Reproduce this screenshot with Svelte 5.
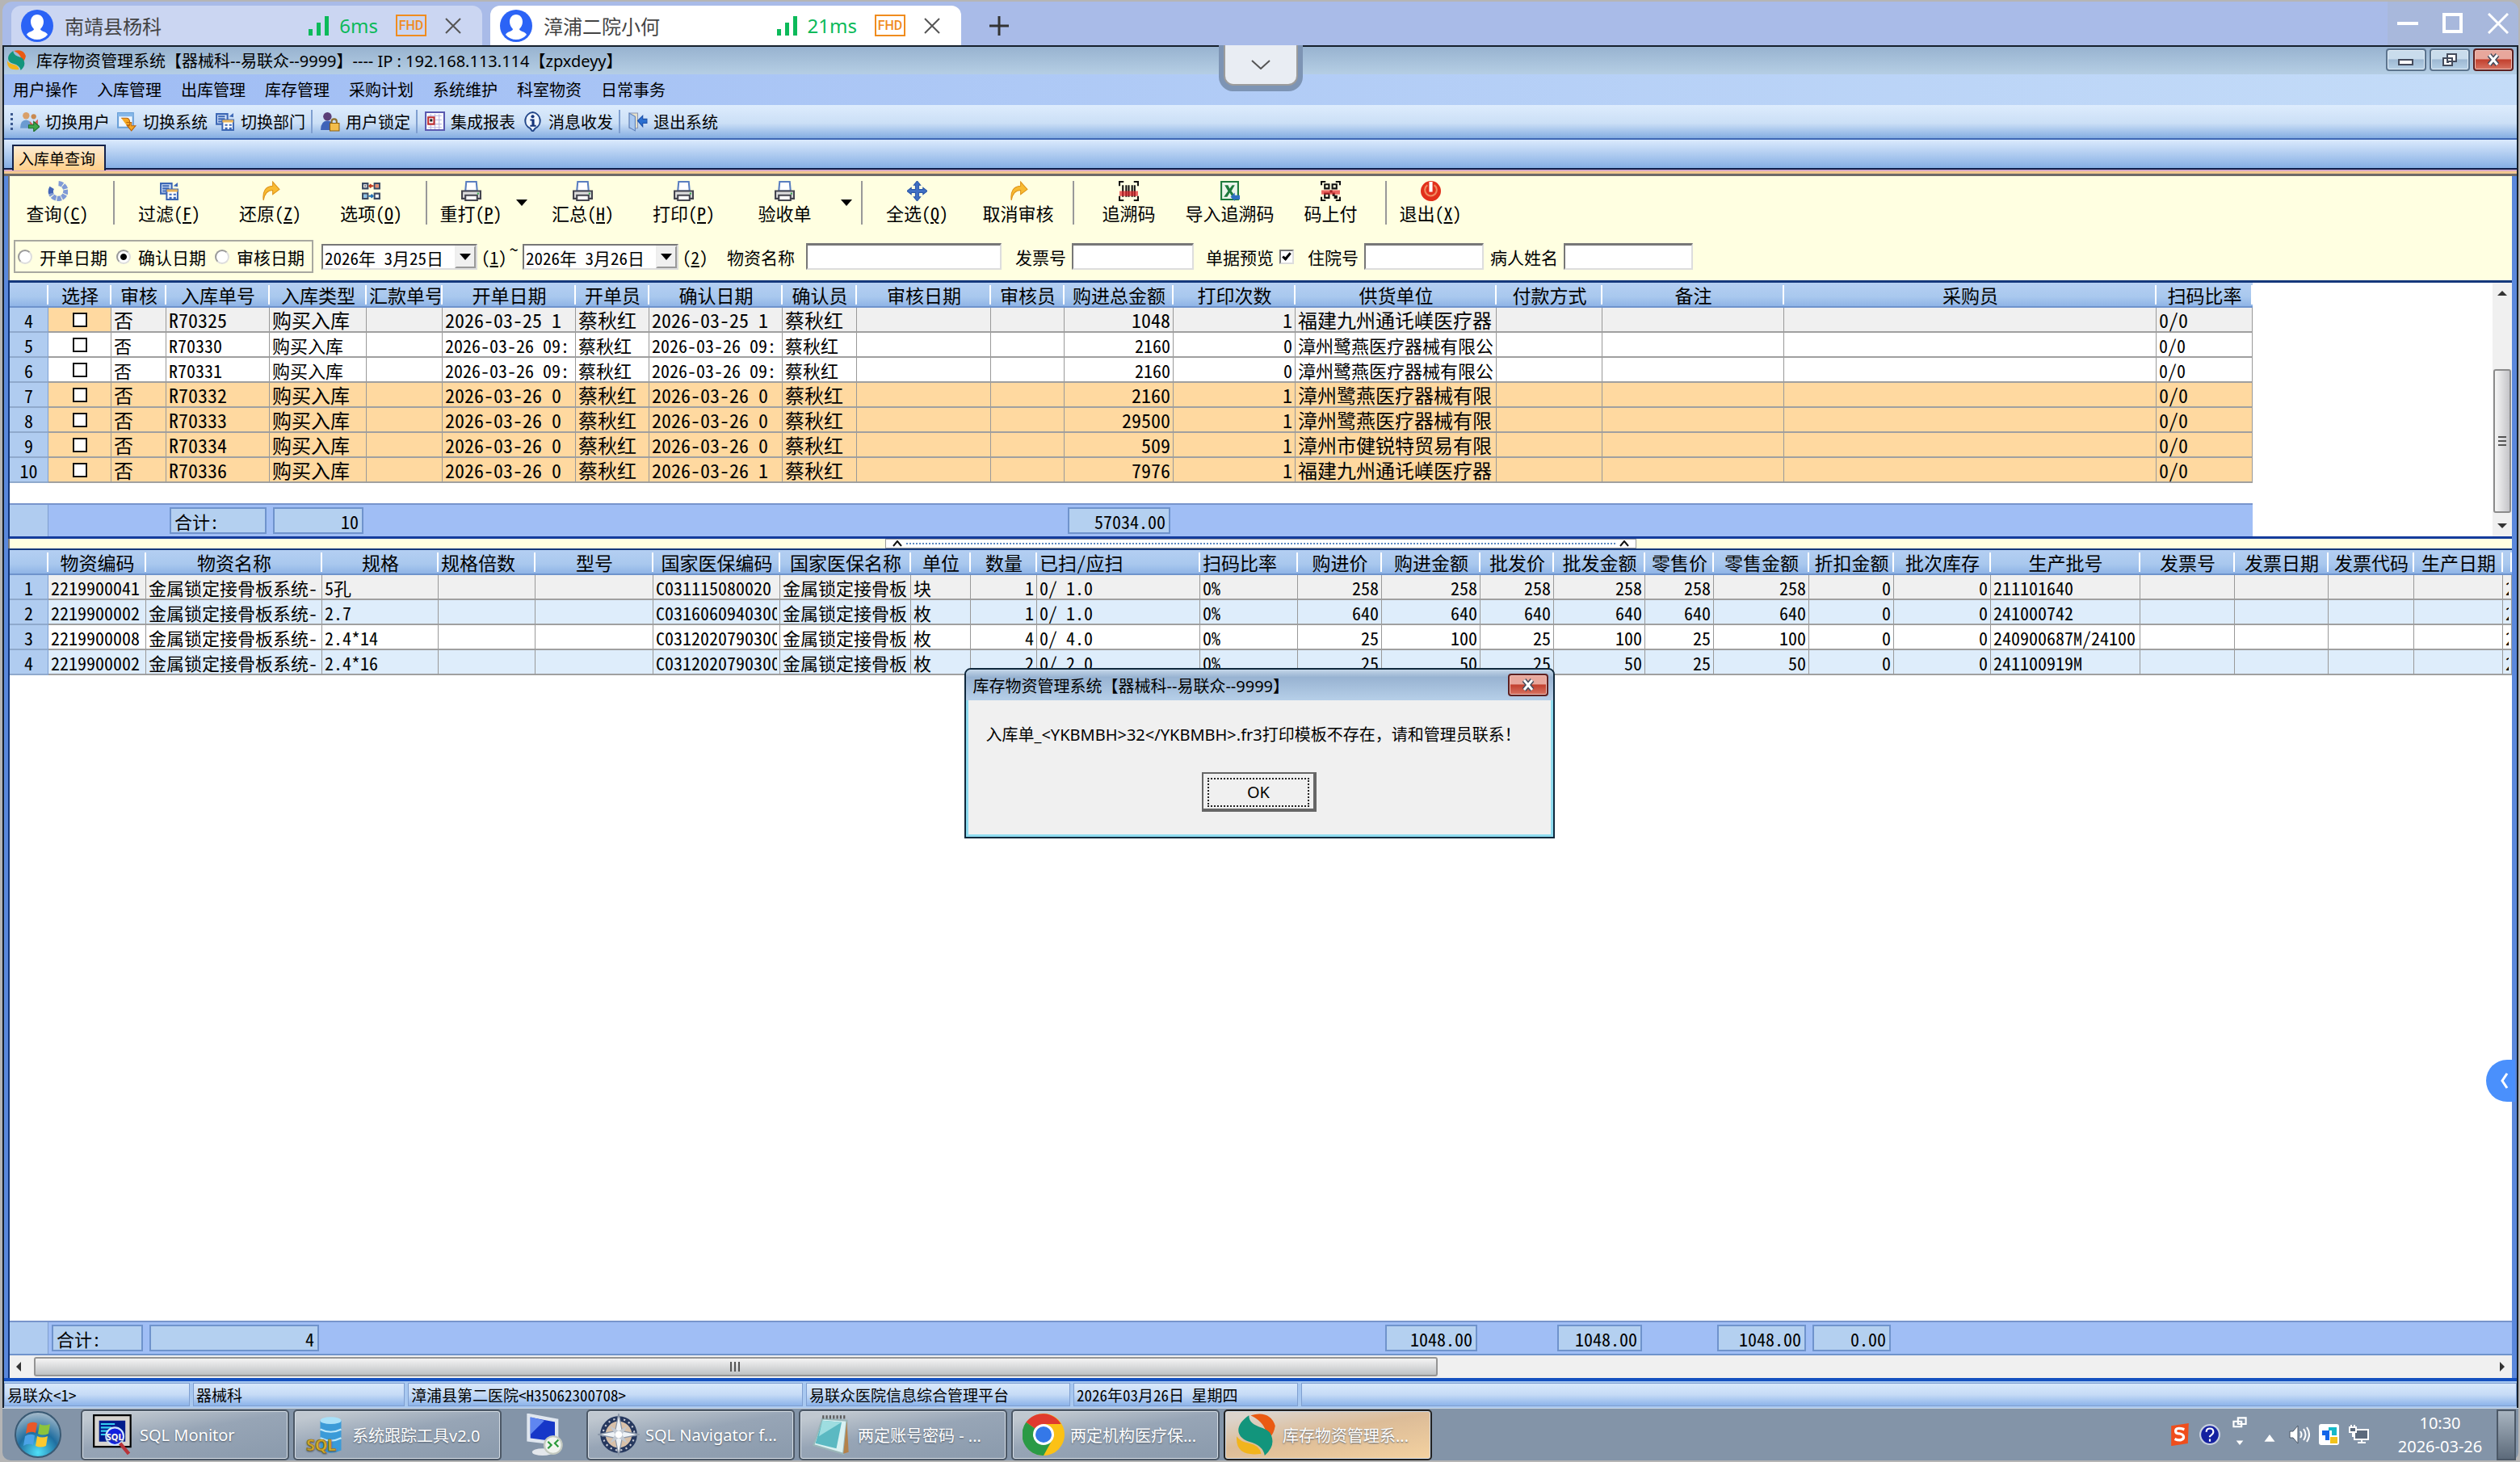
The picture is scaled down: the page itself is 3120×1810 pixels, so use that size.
<!--
  Remote desktop session window. Shows the stock management client with the
  receipt list on top, its detail lines below and a modal message over both.
-->

<script lang="ts">
	// SECTION 1: DATA
	type Column = { title: string; width: number; align?: string; left?: boolean };

	const sessions = [
		{ name: '南靖县杨科', ping: '6ms', active: false },
		{ name: '漳浦二院小何', ping: '21ms', active: true }
	];

	const menus = ['用户操作', '入库管理', '出库管理', '库存管理', '采购计划', '系统维护', '科室物资', '日常事务'];

	const quickTools = [
		[
			{ icon: 'users', label: '切换用户' },
			{ icon: 'system', label: '切换系统' },
			{ icon: 'dept', label: '切换部门' }
		],
		[{ icon: 'lock', label: '用户锁定' }],
		[
			{ icon: 'report', label: '集成报表' },
			{ icon: 'info', label: '消息收发' }
		],
		[{ icon: 'exit', label: '退出系统' }]
	];

	const actions = [
		[{ icon: 'refresh', label: '查询', key: 'C', size: 'first' }],
		[
			{ icon: 'dept', label: '过滤', key: 'F' },
			{ icon: 'redo', label: '还原', key: 'Z' },
			{ icon: 'options', label: '选项', key: 'O' }
		],
		[
			{ icon: 'printer', label: '重打', key: 'P', size: 'narrow', drop: true },
			{ icon: 'printer', label: '汇总', key: 'H' },
			{ icon: 'printer', label: '打印', key: 'P' },
			{ icon: 'printer', label: '验收单', drop: true }
		],
		[
			{ icon: 'move', label: '全选', key: 'Q' },
			{ icon: 'redo', label: '取消审核' }
		],
		[
			{ icon: 'barcode', label: '追溯码' },
			{ icon: 'excel', label: '导入追溯码' },
			{ icon: 'qrcode', label: '码上付' }
		],
		[{ icon: 'power', label: '退出', key: 'X', size: 'narrow' }]
	];

	const dateKinds = ['开单日期', '确认日期', '审核日期'];
	let dateKind = $state('确认日期');
	let preview = $state(true);

	const receiptColumns: Column[] = [
		{ title: '', width: 48 },
		{ title: '选择', width: 78 },
		{ title: '审核', width: 68 },
		{ title: '入库单号', width: 128 },
		{ title: '入库类型', width: 120 },
		{ title: '汇款单号', width: 94 },
		{ title: '开单日期', width: 165 },
		{ title: '开单员', width: 91 },
		{ title: '确认日期', width: 165 },
		{ title: '确认员', width: 92 },
		{ title: '审核日期', width: 166 },
		{ title: '审核员', width: 91 },
		{ title: '购进总金额', width: 135, align: 'right' },
		{ title: '打印次数', width: 151, align: 'right' },
		{ title: '供货单位', width: 249 },
		{ title: '付款方式', width: 131 },
		{ title: '备注', width: 225 },
		{ title: '采购员', width: 461 },
		{ title: '扫码比率', width: 119 }
	];

	function receipt(no: number, code: string, opened: string, confirmed: string, total: string, prints: string, supplier: string, look: string) {
		return {
			no,
			look,
			cells: ['否', code, '购买入库', '', opened, '蔡秋红', confirmed, '蔡秋红', '', '', total, prints, supplier, '', '', '', '0/0']
		};
	}

	const receipts = [
		receipt(4, 'R70325', '2026-03-25 1', '2026-03-25 1', '1048', '1', '福建九州通讬嵄医疗器', 'current'),
		receipt(5, 'R70330', '2026-03-26 09:', '2026-03-26 09:', '2160', '0', '漳州鹭燕医疗器械有限公', 'plain'),
		receipt(6, 'R70331', '2026-03-26 09:', '2026-03-26 09:', '2160', '0', '漳州鹭燕医疗器械有限公', 'plain'),
		receipt(7, 'R70332', '2026-03-26 0', '2026-03-26 0', '2160', '1', '漳州鹭燕医疗器械有限', 'printed'),
		receipt(8, 'R70333', '2026-03-26 0', '2026-03-26 0', '29500', '1', '漳州鹭燕医疗器械有限', 'printed'),
		receipt(9, 'R70334', '2026-03-26 0', '2026-03-26 0', '509', '1', '漳州市健锐特贸易有限', 'printed'),
		receipt(10, 'R70336', '2026-03-26 0', '2026-03-26 1', '7976', '1', '福建九州通讬嵄医疗器', 'printed')
	];

	const detailColumns: Column[] = [
		{ title: '', width: 48 },
		{ title: '物资编码', width: 121 },
		{ title: '物资名称', width: 218 },
		{ title: '规格', width: 144 },
		{ title: '规格倍数', width: 120, left: true },
		{ title: '型号', width: 146 },
		{ title: '国家医保编码', width: 157 },
		{ title: '国家医保名称', width: 162 },
		{ title: '单位', width: 74 },
		{ title: '数量', width: 82, align: 'right' },
		{ title: '已扫/应扫', width: 202, left: true },
		{ title: '扫码比率', width: 121, left: true },
		{ title: '购进价', width: 104, align: 'right' },
		{ title: '购进金额', width: 122, align: 'right' },
		{ title: '批发价', width: 91, align: 'right' },
		{ title: '批发金额', width: 113, align: 'right' },
		{ title: '零售价', width: 85, align: 'right' },
		{ title: '零售金额', width: 118, align: 'right' },
		{ title: '折扣金额', width: 105, align: 'right' },
		{ title: '批次库存', width: 120, align: 'right' },
		{ title: '生产批号', width: 185 },
		{ title: '发票号', width: 117 },
		{ title: '发票日期', width: 116 },
		{ title: '发票代码', width: 106 },
		{ title: '生产日期', width: 110 },
		{ title: '', width: 11 }
	];

	function detail(code: string, spec: string, insurance: string, unit: string, count: string, price: string, sum: string, batch: string) {
		return [
			code, '金属锁定接骨板系统-', spec, '', '', insurance, '金属锁定接骨板', unit, count,
			`0/ ${count}.0`, '0%', price, sum, price, sum, price, sum, '0', '0', batch, '', '', '', '', '2'
		];
	}

	const details = [
		detail('2219900041', '5孔', 'C031115080020', '块', '1', '258', '258', '211101640'),
		detail('2219900002', '2.7', 'C0316060940300', '枚', '1', '640', '640', '241000742'),
		detail('2219900008', '2.4*14', 'C0312020790300', '枚', '4', '25', '100', '240900687M/24100'),
		detail('2219900002', '2.4*16', 'C0312020790300', '枚', '2', '25', '50', '241100919M')
	];

	// Totals by column index
	const receiptTotals: Record<number, string> = { 3: '合计:', 4: '10', 12: '57034.00' };
	const detailTotals: Record<number, string> = {
		1: '合计:', 2: '4', 13: '1048.00', 15: '1048.00', 17: '1048.00', 18: '0.00'
	};

	const statusPanels = [
		{ text: '易联众<1>', width: 230 },
		{ text: '器械科', width: 262 },
		{ text: '漳浦县第二医院<H35062300708>', width: 489 },
		{ text: '易联众医院信息综合管理平台', width: 327 },
		{ text: '2026年03月26日 星期四', width: 278 }
	];

	const tasks = [
		{ icon: 'monitor', label: 'SQL Monitor' },
		{ icon: 'database', label: '系统跟踪工具v2.0' },
		{ icon: 'remote', label: '' },
		{ icon: 'compass', label: 'SQL Navigator f...' },
		{ icon: 'notepad', label: '两定账号密码 - ...' },
		{ icon: 'chrome', label: '两定机构医疗保...' },
		{ icon: 'app', label: '库存物资管理系...', active: true }
	];
</script>

<!-- SECTION 2: ICONS -->
{#snippet icon(name: string)}
	<svg class="icon" viewBox="0 0 24 24" aria-hidden="true">
		{#if name === 'users'}
			<circle cx="8" cy="5" r="4" fill="#d9a06a" /><circle cx="17" cy="6" r="3" fill="#c98a50" />
			<path d="M1 20q0-10 7-10 6 0 7 10z" fill="#6b9bd1" /><path d="M12 11l4 4 6-6v7h-9z" fill="#d26058" />
			<path d="M11 16h6v-4l7 6-7 6v-4h-6z" fill="#3fa64a" stroke="#1f6f2a" />
		{:else if name === 'system'}
			<path d="M1 2h18v17H1z" fill="#eef6ff" stroke="#6aa0d8" stroke-width="2" /><path d="M1 2h18v4H1z" fill="#86b8e8" />
			<path d="M5 8h6q4 0 4 5v3h-4M11 13h6v4h5l-5 6-5-6h3" fill="#f7a823" stroke="#b9640c" stroke-width="1" />
		{:else if name === 'dept'}
			<path d="M2 3h13v12H2z" fill="#dbe8fb" stroke="#3c67b5" stroke-width="2" /><path d="M4 6h8M4 9h8M4 12h5" stroke="#3c67b5" stroke-width="2" />
			<path d="M9 10h13v12H9z" fill="#fff" stroke="#3c67b5" stroke-width="2" /><path d="M9 10h13v3H9z" fill="#e8b35a" />
			<path d="M12 15h3v2h-3zM17 15h3v2h-3zM12 19h3v2h-3zM17 19h3v2h-3z" fill="#3c67b5" /><path d="M17 6l5-4v5z" fill="#3c67b5" />
		{:else if name === 'lock'}
			<circle cx="9" cy="6" r="5" fill="#5b3f78" /><path d="M1 22q0-11 8-11t8 11z" fill="#3f63b8" />
			<path d="M14 14v-2q0-3 3-3t3 3v2" fill="none" stroke="#8c6f2d" stroke-width="2" /><path d="M12 14h11v9H12z" fill="#f3bd4a" stroke="#8c6010" />
		{:else if name === 'report'}
			<path d="M1 1h22v21H1z" fill="#fdfdff" stroke="#5a5ab0" stroke-width="2" />
			<path d="M4 5h16M4 10h16M4 15h16M4 19h16M7 3v18M12 3v18M17 3v18" stroke="#b9b6e0" /><path d="M4 7h7v8H4z" fill="#fff" stroke="#c03030" stroke-width="2" /><path d="M6 9h3v3H6z" fill="#222" />
		{:else if name === 'info'}
			<path d="M12 1a10 10 0 0 1 3 19l-3 4-3-4a10 10 0 0 1 3-19z" fill="#eef5ff" stroke="#24488a" stroke-width="2" />
			<circle cx="12" cy="6" r="2" fill="#16357a" /><path d="M9 9h5v7h2v2H9v-2h2v-5H9z" fill="#16357a" />
		{:else if name === 'exit'}
			<path d="M2 2h10v18H2z" fill="#e6e0c8" stroke="#8a96b4" /><path d="M2 2l7 4v17l-7-4z" fill="#a9c8f0" stroke="#5c7fb8" />
			<path d="M12 11l6-6v4h5v5h-5v4z" fill="#2a6fd0" stroke="#1a4fa8" />
		{:else if name === 'refresh'}
			<path d="M13 3a9 9 0 1 1-9 12" fill="none" stroke="#7f9ad6" stroke-width="6" stroke-dasharray="5 1" />
			<path d="M4 15a9 9 0 0 1 1-7" fill="none" stroke="#4466b8" stroke-width="6" />
		{:else if name === 'redo'}
			<path d="M4 23q-2-16 11-17V1l8 9-8 6v-5q-9 0-11 12z" fill="#f8bb32" stroke="#de9318" />
		{:else if name === 'options'}
			<path d="M2 3h6v6H2zM16 3h6v6h-6zM2 15h6v6H2zM16 15h6v6h-6z" fill="#fff" stroke="#3b4a63" stroke-width="2" />
			<path d="M15 6h-5m2-2l-2 2 2 2" stroke="#c23b22" stroke-width="2" fill="none" /><path d="M9 18h5m-2-2l2 2-2 2" stroke="#2472b8" stroke-width="2" fill="none" />
			<path d="M4 5h2v2H4z" fill="#777" /><path d="M17 4h4v4h-4z" fill="#e88b6c" /><path d="M3 16h4v4H3z" fill="#8cc3e6" />
		{:else if name === 'printer'}
			<path d="M6 1h12l1 11H5z" fill="#fff" stroke="#5a7ec0" stroke-width="2" /><path d="M1 12h22v9H1z" fill="#dcdcdc" stroke="#44444e" stroke-width="2" />
			<path d="M5 17h14v6H5z" fill="#fafafa" stroke="#44444e" stroke-width="2" /><path d="M19 14h2v2h-2z" fill="#35a54a" />
		{:else if name === 'move'}
			<path d="M12 0l4 5h-2v5h5V8l5 4-5 4v-2h-5v5h2l-4 5-4-5h2v-5H5v2l-5-4 5-4v2h5V5H8z" fill="#3f6fc4" stroke="#2c58a8" />
		{:else if name === 'barcode'}
			<path d="M1 6V1h5M18 1h5v5M1 18v5h5M18 23h5v-5" fill="none" stroke="#111" stroke-width="2" />
			<path d="M5 5v14M9 5v14M12 5v14M16 5v14M19 5v14" stroke="#111" stroke-width="2" /><path d="M1 12h22v6H1z" fill="#e2242a" opacity="0.7" />
		{:else if name === 'excel'}
			<path d="M2 1h20v21H2z" fill="#eaf5ea" stroke="#1d7a3c" stroke-width="2" /><path d="M6 5h4l2 4 3-4h3l-4 7 5 7h-4l-3-5-3 5H5l5-7z" fill="#1d7a3c" />
			<path d="M13 19l5-5v3h6v5h-6v2z" fill="#2d6fc0" />
		{:else if name === 'qrcode'}
			<path d="M1 5V1h5M18 1h5v4M1 19v4h5M18 23h5v-4" fill="none" stroke="#111" stroke-width="2" />
			<path d="M5 4h5v5H5zM14 4h5v5h-5zM5 15h5v5H5z" fill="none" stroke="#111" stroke-width="2" /><path d="M14 14h3v3h3v4h-4v-3h-2zM11 11h3v3h-3z" fill="#111" /><path d="M1 11h22v5H1z" fill="#e2242a" opacity="0.7" />
		{:else if name === 'power'}
			<circle cx="12" cy="12" r="12" fill="#e2301b" /><path d="M8 5a7 7 0 1 0 8 0" fill="none" stroke="#f08a60" stroke-width="2" /><path d="M10 1h4v12h-4z" fill="#fff" />
		{:else if name === 'monitor'}
			<path d="M1 1h21v18H1z" fill="#d6d3ce" stroke="#000" /><path d="M4 4h15v12H4z" fill="#001c8c" /><path d="M5 6h8M5 8h6M5 10h4M5 12h3" stroke="#35d0f0" />
			<circle cx="13" cy="13" r="5" fill="#1220e0" stroke="#cfe6ff" /><path d="M16 17l5 6" stroke="#b8343a" stroke-width="2" />
			<text x="13" y="15" text-anchor="middle" font-size="5" font-weight="bold" fill="#fff">SQL</text>
		{:else if name === 'database'}
			<path d="M9 4v17q6 3 12 0V4z" fill="#3b9bd8" /><ellipse cx="15" cy="4" rx="6" ry="2" fill="#a8e0f8" />
			<path d="M9 9q6 3 12 0M9 14q6 3 12 0" fill="none" stroke="#bfe8fa" /><text x="1" y="21" font-size="9" font-weight="bold" fill="#f8c51c" stroke="#94690a" stroke-width="0.3">SQL</text>
		{:else if name === 'remote'}
			<path d="M3 1l16 3v13L3 15z" fill="#1637c8" stroke="#dfe6ef" stroke-width="2" /><path d="M4 2l8 2-8 8z" fill="#5f86f0" />
			<ellipse cx="11" cy="22" rx="6" ry="2" fill="#e3e7ec" /><circle cx="17" cy="18" r="5" fill="#f1f4ef" stroke="#c3c9c0" /><path d="M14 16l2 2-2 2M20 15l-2 2 2 2" stroke="#2a9a3a" fill="none" />
		{:else if name === 'compass'}
			<circle cx="12" cy="12" r="9" fill="#d8c0a8" stroke="#26385e" stroke-width="3" />
			<circle cx="12" cy="12" r="9" fill="none" stroke="#c8ccd8" stroke-width="1" stroke-dasharray="1 2" />
			<path d="M12 0l2 10 10 2-10 2-2 10-2-10-10-2 10-2z" fill="#eef2f6" stroke="#8a96a8" stroke-width="0.6" />
			<path d="M7 7l5 3 5-3-3 5 3 5-5-3-5 3 3-5z" fill="#c2c9d2" /><circle cx="12" cy="12" r="2" fill="#fff" />
		{:else if name === 'notepad'}
			<path d="M7 3l14 1-2 19-17-5z" fill="#d9f1f2" stroke="#9ab5b8" /><path d="M7 4l11 1-3 15-12-3z" fill="#5bb9c2" /><path d="M7 4l11 1-13 8z" fill="#9edde0" /><path d="M7 2h14" stroke="#5a5a5a" stroke-width="2" stroke-dasharray="1 1" /><path d="M21 4l1 18-3 1z" fill="#b4824a" />
		{:else if name === 'chrome'}
			<circle cx="12" cy="12" r="12" fill="#fbc116" /><path d="M12 12L2 5a12 12 0 0 1 20 1H12z" fill="#e03a2e" />
			<path d="M2 5a12 12 0 0 0 10 19l5-9-5-3z" fill="#2a9a46" /><circle cx="12" cy="12" r="6" fill="#fff" /><circle cx="12" cy="12" r="4.6" fill="#3478e8" />
		{:else if name === 'app'}
			<path d="M9 1q11-3 14 6-1 6-5 8 1-9-9-14z" fill="#ea5a12" /><path d="M8 1C-1 7 1 14 8 16q8 2 9 8 7-6 3-13C17 7 8 8 8 1z" fill="#12957c" />
			<path d="M1 13q-1 12 14 10-1-5-7-6-5-1-7-4z" fill="#f2b41c" />
		{/if}
	</svg>
{/snippet}

{#snippet cols(columns: Column[])}
	<colgroup>
		{#each columns as column}
			<col style="width: {column.width}px" />
		{/each}
	</colgroup>
{/snippet}

{#snippet totals(columns: Column[], values: Record<number, string>)}
	<table class="grid totals" style="width: {columns.reduce((sum, c) => sum + c.width, 0)}px">
		{@render cols(columns)}
		<tbody>
			<tr>
				{#each columns as column, i}
					<td class:rownum={i === 0}>
						{#if values[i]}
							<div class="total" class:caption={values[i] === '合计:'}>{values[i]}</div>
						{/if}
					</td>
				{/each}
			</tr>
		</tbody>
	</table>
{/snippet}

{#snippet cross()}
	<svg class="cross" viewBox="0 0 16 16" aria-hidden="true">
		<path d="M3 2l10 12M13 2L3 14" stroke="#444b5c" stroke-width="6" /><path d="M3 2l10 12M13 2L3 14" stroke="#fff" stroke-width="3" />
	</svg>
{/snippet}

<!-- SECTION 3: PAGE -->
<div class="page">
	<header class="sessions">
		{#each sessions as session}
			<div class="session" class:active={session.active}>
				<svg class="avatar" viewBox="0 0 40 40" aria-hidden="true">
					<circle cx="20" cy="20" r="20" fill="#2b63f6" />
					<path d="M20 6c5 0 8 4 8 9 0 4-2 7-4 9 0 3 8 3 9 7-7 8-19 8-26 0 1-4 9-4 9-7-2-2-4-5-4-9 0-5 3-9 8-9z" fill="#fff" />
				</svg>
				<span class="session-name">{session.name}</span>
				<svg class="signal" viewBox="0 0 26 24" aria-hidden="true"><path d="M0 16h5v8H0zM10 8h5v16h-5zM20 0h5v24h-5z" fill="#0cba5a" /></svg>
				<span class="ping">{session.ping}</span>
				<span class="fhd">FHD</span>
				<button class="session-close" aria-label="关闭">
					<svg viewBox="0 0 20 20"><path d="M1 1l18 18M19 1L1 19" stroke="#555" stroke-width="2" /></svg>
				</button>
			</div>
		{/each}
		<button class="add" aria-label="新建">
			<svg viewBox="0 0 24 24"><path d="M12 0v24M0 12h24" stroke="#333" stroke-width="3" /></svg>
		</button>
		<div class="viewer-controls">
			<button aria-label="最小化"><svg viewBox="0 0 26 26"><path d="M0 13h26" stroke="#fff" stroke-width="4" /></svg></button>
			<button aria-label="最大化"><svg viewBox="0 0 26 26"><path d="M2 2h21v21H2z" fill="none" stroke="#fff" stroke-width="4" /></svg></button>
			<button aria-label="关闭"><svg viewBox="0 0 26 26"><path d="M1 1l24 24M25 1L1 25" stroke="#fff" stroke-width="3" /></svg></button>
		</div>
	</header>

	<main class="window">
		<button class="pull" aria-label="展开">
			<svg viewBox="0 0 24 12"><path d="M1 1l11 10L23 1" fill="none" stroke="#555" stroke-width="2" /></svg>
		</button>

		<div class="titlebar">
			{@render icon('app')}
			<h1>库存物资管理系统【器械科--易联众--9999】---- IP : 192.168.113.114【zpxdeyy】</h1>
			<button class="caption-button" aria-label="最小化"><svg viewBox="0 0 24 16"><path d="M3 8h17v6H3z" fill="#fff" stroke="#444b5c" stroke-width="2" /></svg></button>
			<button class="caption-button" aria-label="还原"><svg viewBox="0 0 24 16"><path d="M9 1h11v9H9zM4 6h11v9H4z" fill="#fff" stroke="#444b5c" stroke-width="2" /><path d="M8 10h3v2H8z" fill="#444b5c" /></svg></button>
			<button class="caption-button close" aria-label="关闭">{@render cross()}</button>
		</div>

		<nav class="menu">
			{#each menus as menu}
				<button>{menu}</button>
			{/each}
		</nav>

		<div class="quick">
			{#each quickTools as group}
				<div class="quick-group">
					{#each group as tool}
						<button>{@render icon(tool.icon)}{tool.label}</button>
					{/each}
				</div>
			{/each}
		</div>

		<div class="tabstrip"><button class="tab">入库单查询</button></div>

		<div class="mdi">
			<div class="actions">
				{#each actions as group}
					<div class="action-group">
						{#each group as action}
							<button class="action {action.size ?? ''}">
								{@render icon(action.icon)}
								<span>{action.label}{#if action.key}(<u>{action.key}</u>){/if}</span>
							</button>
							{#if action.drop}
								<button class="drop" aria-label="更多"><span class="triangle"></span></button>
							{/if}
						{/each}
					</div>
				{/each}
			</div>

			<form class="filters">
				<fieldset>
					{#each dateKinds as kind}
						<label><input type="radio" name="kind" value={kind} bind:group={dateKind} />{kind}</label>
					{/each}
				</fieldset>
				<div class="combo">
					<select aria-label="开始日期"><option>2026年 3月25日</option></select>
					<span class="combo-arrow"><span class="triangle"></span></span>
				</div>
				<span class="hint">(<u>1</u>)</span>
				<span class="tilde">~</span>
				<div class="combo">
					<select aria-label="结束日期"><option>2026年 3月26日</option></select>
					<span class="combo-arrow"><span class="triangle"></span></span>
				</div>
				<span class="hint second">(<u>2</u>)</span>
				<label class="field goods">物资名称<input type="text" /></label>
				<label class="field invoice">发票号<input type="text" /></label>
				<label class="field check">单据预览<input type="checkbox" bind:checked={preview} /></label>
				<label class="field patient">住院号<input type="text" /></label>
				<label class="field person">病人姓名<input type="text" /></label>
			</form>

			<section class="pane receipts">
				<div class="pane-body">
					<table class="grid receipt-grid">
						{@render cols(receiptColumns)}
						<thead>
							<tr>
								{#each receiptColumns as column}
									<th><div>{column.title}</div></th>
								{/each}
							</tr>
						</thead>
						<tbody>
							{#each receipts as row}
								<tr class={row.look}>
									<td class="rownum">{row.no}</td>
									<td class="pick"><input type="checkbox" aria-label="选择 {row.no}" /></td>
									{#each row.cells as cell, i}
										<td class={receiptColumns[i + 2].align}><div>{cell}</div></td>
									{/each}
								</tr>
							{/each}
						</tbody>
					</table>
					{@render totals(receiptColumns, receiptTotals)}
				</div>
				<div class="vscroll">
					<span class="arrow up"></span>
					<div class="thumb"></div>
					<span class="arrow down"></span>
				</div>
			</section>

			<div class="splitter">
				<div class="splitter-handle">
					<svg viewBox="0 0 12 8"><path d="M1 7l5-6 5 6" fill="none" stroke="#111" stroke-width="2" /></svg>
					<span></span>
					<svg viewBox="0 0 12 8"><path d="M1 7l5-6 5 6" fill="none" stroke="#111" stroke-width="2" /></svg>
				</div>
			</div>

			<section class="pane details">
				<table class="grid">
					{@render cols(detailColumns)}
					<thead>
						<tr>
							{#each detailColumns as column}
								<th class:left={column.left}><div>{column.title}</div></th>
							{/each}
						</tr>
					</thead>
					<tbody>
						{#each details as cells, n}
							<tr class:current={n === 0} class:striped={n % 2 === 1}>
								<td class="rownum">{n + 1}</td>
								{#each cells as cell, i}
									<td class={detailColumns[i + 1].align}><div>{cell}</div></td>
								{/each}
							</tr>
						{/each}
					</tbody>
				</table>
				<div class="detail-totals">{@render totals(detailColumns, detailTotals)}</div>
				<div class="hscroll">
					<span class="arrow prev"></span>
					<div class="thumb"></div>
					<span class="track"></span>
					<span class="arrow next"></span>
				</div>
			</section>
		</div>

		<footer class="status">
			{#each statusPanels as panel}
				<div style="width: {panel.width}px">{panel.text}</div>
			{/each}
			<div class="rest"></div>
		</footer>

		<div class="dialog" role="alertdialog" aria-labelledby="dialog-title">
			<div class="dialog-title">
				<h2 id="dialog-title">库存物资管理系统【器械科--易联众--9999】</h2>
				<button class="caption-button close" aria-label="关闭">{@render cross()}</button>
			</div>
			<p>入库单_&lt;YKBMBH&gt;32&lt;/YKBMBH&gt;.fr3打印模板不存在，请和管理员联系！</p>
			<button class="ok"><span>OK</span></button>
		</div>

		<button class="side" aria-label="侧栏">
			<svg viewBox="0 0 10 20"><path d="M8 1L2 10l6 9" fill="none" stroke="#fff" stroke-width="3" /></svg>
		</button>
	</main>

	<div class="taskbar">
		<button class="start" aria-label="开始">
			<svg viewBox="0 0 58 58">
				<defs>
					<radialGradient id="orb" cx="0.5" cy="0.9" r="0.9"><stop offset="0" stop-color="#4fe0f8" /><stop offset="0.5" stop-color="#1f6ea0" /><stop offset="1" stop-color="#a9bccb" /></radialGradient>
				</defs>
				<circle cx="29" cy="29" r="28" fill="url(#orb)" stroke="#3a5a74" stroke-width="2" />
				<path d="M16 16q6-4 12-1l-2 12q-6-3-12 1z" fill="#e8582a" /><path d="M31 16q6 3 13 0l-2 12q-7 3-13 0z" fill="#8cc43c" />
				<path d="M13 31q6-4 12-1l-2 12q-6-3-12 1z" fill="#4ba3e8" /><path d="M28 31q6 3 13 0l-2 12q-7 3-13 0z" fill="#fbc92e" />
			</svg>
		</button>
		{#each tasks as task}
			<button class="task" class:pinned={!task.label} class:active={task.active} aria-label={task.label || '远程桌面'}>
				{@render icon(task.icon)}
				{#if task.label}<span>{task.label}</span>{/if}
			</button>
		{/each}
		<div class="tray">
			<svg viewBox="0 0 24 26"><path d="M2 3l20-3-1 23-19 3z" fill="#f04e1c" /><path d="M17 7q-10-3-10 2 0 3 5 3 5 1 4 5-3 4-10 1" fill="none" stroke="#fff" stroke-width="3" /></svg>
			<svg viewBox="0 0 24 26"><circle cx="12" cy="13" r="11" fill="#1420a0" stroke="#c8d0e0" stroke-width="2" /><path d="M8 10q0-4 4-4t4 4q0 2-4 5v1" fill="none" stroke="#fff" stroke-width="2" /><path d="M11 18h2v3h-2z" fill="#fff" /></svg>
			<svg viewBox="0 0 24 48"><path d="M10 5h9v7h-9zM5 9h9v6H5z" fill="#8394a8" stroke="#fff" stroke-width="2" /><path d="M8 31h8l-4 5z" fill="#fff" /></svg>
			<svg viewBox="0 0 24 26"><path d="M12 13l6 8H6z" fill="#fff" /></svg>
			<svg viewBox="0 0 26 26"><path d="M1 9h4l6-7v22l-6-7H1z" fill="#fff" stroke="#4a5666" /><path d="M14 9q3 4 0 8M18 6q5 7 0 14M22 4q6 9 0 18" fill="none" stroke="#fff" stroke-width="2" /></svg>
			<svg viewBox="0 0 26 26"><rect width="25" height="26" rx="3" fill="#fff" /><path d="M4 8h9v12H8v-6H4z" fill="#1466e8" /><path d="M12 4h10v10h-6V8h-4z" fill="#16b8c8" /><path d="M14 16h9v8h-9z" fill="#f2c31c" /></svg>
			<svg viewBox="0 0 26 26"><path d="M7 7h17v12H7zM11 23h10M16 19v4" fill="#5c6a7c" stroke="#fff" stroke-width="2" /><path d="M1 4h8v6H1zM3 1v3M7 1v3M5 10v6" fill="#5c6a7c" stroke="#fff" stroke-width="2" /></svg>
			<div class="clock"><span>10:30</span><span>2026-03-26</span></div>
		</div>
		<button class="show-desktop" aria-label="显示桌面"></button>
	</div>
</div>

<style>
	/* SECTION 4: STYLING */
	:global(body) {
		margin: 0;
	}
	.page {
		--ui: 'Noto Sans', 'Noto Sans CJK SC', sans-serif;
		--song: 'Noto Sans Mono CJK SC', 'Noto Sans CJK SC', monospace;
		display: flex;
		flex-direction: column;
		box-sizing: border-box;
		min-height: 100vh;
		padding: 2px 2px 2px 3px;
		background: #b5b5b5;
		font-family: var(--ui);
		font-size: 20px;
		color: #000;
	}
	.page *,
	.page *::after {
		box-sizing: border-box;
	}
	button,
	input,
	select {
		margin: 0;
		padding: 0;
		border: 0;
		border-radius: 0;
		background: none;
		font: inherit;
		color: inherit;
	}
	h1,
	h2,
	p {
		margin: 0;
		font-size: 20px;
		font-weight: normal;
	}
	svg {
		display: block;
	}
	.icon {
		width: 25px;
		height: 25px;
		flex: none;
	}

	/* Session tabs of the remote viewer */
	.sessions {
		display: flex;
		height: 54px;
		padding-left: 11px;
		border-radius: 12px 12px 0 0;
		background: #a9bbe8;
		overflow: hidden;
	}
	.session {
		display: flex;
		align-items: center;
		width: 583px;
		margin: 5px 10px 0 0;
		padding: 0 26px 0 12px;
		border-radius: 12px 12px 0 0;
		background: #cbd6f2;
	}
	.session.active {
		background: #fff;
	}
	.avatar {
		width: 40px;
		height: 40px;
	}
	.session-name {
		flex: 1;
		margin-left: 14px;
		font-size: 24px;
		color: #444;
	}
	.signal {
		width: 26px;
		height: 24px;
	}
	.ping {
		margin: 0 22px 0 12px;
		font-size: 24px;
		color: #0cba5a;
	}
	.fhd {
		width: 38px;
		border: 2px solid #f08c1e;
		font-family: Roboto, sans-serif;
		font-size: 16px;
		font-weight: 500;
		line-height: 23px;
		text-align: center;
		color: #f08c1e;
	}
	.session-close {
		width: 20px;
		margin-left: 23px;
	}
	.add {
		width: 24px;
		margin: 6px 0 0 25px;
	}
	.viewer-controls {
		display: flex;
		align-items: center;
		gap: 30px;
		margin-left: auto;
		padding: 0 12px;
		background: #a8b8dc;
	}
	.viewer-controls svg {
		width: 26px;
	}

	/* Application window */
	.window {
		position: relative;
		flex: 1;
		display: flex;
		flex-direction: column;
		border: solid #16202c;
		border-width: 2px 2px 0;
	}
	.pull {
		position: absolute;
		top: -2px;
		left: 50%;
		width: 92px;
		height: 50px;
		margin-left: -46px;
		border: 2px solid #9c9c9c;
		border-top: 0;
		border-radius: 0 0 12px 12px;
		background: #e9edf3;
		box-shadow: 0 1px 0 6px #7d94b4;
		clip-path: inset(0 -8px -8px -8px);
	}
	.pull svg {
		width: 24px;
		margin: 0 auto;
	}
	.titlebar {
		display: flex;
		align-items: center;
		gap: 4px;
		height: 34px;
		padding: 0 4px 2px 3px;
		background: linear-gradient(#98b3d0, #b5cee4);
	}
	.titlebar h1 {
		flex: 1;
		margin-left: 8px;
	}
	.caption-button {
		display: flex;
		align-items: center;
		justify-content: center;
		width: 50px;
		height: 28px;
		border: 2px solid #5c748e;
		border-radius: 4px;
		background: linear-gradient(#c9dcec 45%, #9db8d2 50%, #b6d0e6);
		box-shadow: inset 0 0 0 1px #e2eef8;
	}
	.caption-button svg {
		width: 24px;
		height: 16px;
	}
	.caption-button.close {
		border-color: #5e2020;
		background: linear-gradient(#e8a79c 45%, #c2402e 50%, #d77362);
		box-shadow: inset 0 0 0 1px #f0c0b8;
	}
	.menu {
		display: flex;
		align-items: center;
		gap: 24px;
		height: 38px;
		padding: 0 0 2px 11px;
		background: linear-gradient(90deg, #9fbcf4, #c4dcf8);
	}
	.quick {
		display: flex;
		align-items: center;
		height: 43px;
		padding: 0 0 0 20px;
		border-bottom: 2px solid #3f68b4;
		background: linear-gradient(#ddecfd, #cbdff6 55%, #84ade2);
	}
	.quick-group {
		display: flex;
		gap: 9px;
		padding-right: 7px;
		border-right: 2px solid #7f9fd0;
		margin-right: 9px;
	}
	.quick-group:last-child {
		border: 0;
	}
	.quick button {
		display: flex;
		align-items: center;
		gap: 7px;
	}
	.quick::before {
		content: '';
		width: 3px;
		height: 22px;
		margin: 0 8px 0 -12px;
		background: repeating-linear-gradient(#3c5a90 0 3px, transparent 3px 6px);
	}
	.tabstrip {
		height: 45px;
		padding: 6px 0 0 10px;
		background: linear-gradient(#dbeafd, #86afe4 35px, #10204c 35px 37px, #d8a8c8 37px 39px, #f2c890 39px 42px, #6e6a68 42px);
	}
	.tab {
		width: 116px;
		height: 32px;
		padding-left: 6px;
		border: 2px solid #14224a;
		border-bottom: 0;
		background: linear-gradient(#fdebd2, #ffd08a);
		font-family: var(--song);
		font-size: 19px;
		line-height: 28px;
		text-align: left;
	}
	.mdi {
		flex: 1;
		display: flex;
		flex-direction: column;
		min-width: 0;
		padding: 0 6px 0 5px;
		border-bottom: 4px solid #1450c0;
		background: #5a88dc;
	}
	.actions,
	.filters {
		display: flex;
		border-left: 2px solid #777;
		background: #ffffe1;
		font-family: var(--song);
	}

	/* Large buttons */
	.actions {
		height: 75px;
		padding-top: 6px;
		font-size: 22px;
	}
	.action-group {
		display: flex;
		height: 54px;
	}
	.action-group + .action-group {
		margin-left: 5px;
		padding-left: 5px;
		border-left: 2px solid #999;
	}
	.action {
		display: flex;
		flex-direction: column;
		align-items: center;
		width: 125px;
		line-height: 28px;
		white-space: nowrap;
	}
	.action.first {
		width: 118px;
		margin-right: 5px;
	}
	.action.narrow {
		width: 98px;
	}
	.drop {
		width: 27px;
	}
	.triangle {
		display: block;
		margin: 0 auto;
		width: 14px;
		border: solid transparent;
		border-width: 8px 7px 0;
		border-top-color: #000;
	}

	/* Filter row */
	.filters {
		align-items: center;
		height: 54px;
		padding: 0 0 5px 5px;
		font-size: 21px;
		white-space: nowrap;
	}
	fieldset {
		display: flex;
		align-items: center;
		gap: 11px;
		width: 371px;
		height: 41px;
		margin: 0;
		padding: 0 3px;
		border: 2px solid #a8a8a0;
	}
	fieldset label {
		display: flex;
		align-items: center;
		gap: 9px;
	}
	input[type='radio'] {
		appearance: none;
		width: 18px;
		height: 18px;
		border: 2px solid #9a9a9a;
		border-right-color: #ddd;
		border-bottom-color: #ddd;
		border-radius: 50%;
		background: #fff;
	}
	input[type='radio']:checked {
		background: radial-gradient(#000 35%, #fff 45%);
	}
	.combo {
		display: flex;
		width: 193px;
		height: 32px;
		border: 2px solid #777;
		border-right-color: #ddd;
		border-bottom-color: #ddd;
		background: #fff;
	}
	fieldset + .combo {
		margin-left: 10px;
	}
	.combo select {
		appearance: none;
		flex: 1;
		min-width: 0;
		padding-left: 2px;
		overflow: visible;
	}
	.combo-arrow {
		display: flex;
		align-items: center;
		width: 26px;
		border: 2px outset #eee;
		background: #f0f0f0;
	}
	.hint {
		width: 40px;
		padding-left: 5px;
	}
	.hint.second {
		width: 60px;
	}
	.tilde {
		width: 16px;
		align-self: flex-start;
	}
	.field {
		display: flex;
		align-items: center;
		gap: 7px;
		margin-right: 17px;
	}
	.field input[type='text'] {
		height: 33px;
		border: 2px solid #777;
		border-top-width: 3px;
		border-right-color: #ddd;
		border-bottom-color: #ddd;
		background: #fff;
	}
	.goods input {
		width: 242px;
	}
	.goods {
		gap: 14px;
	}
	.invoice input {
		width: 151px;
	}
	.invoice {
		margin-right: 15px;
	}
	.check input {
		appearance: none;
		width: 18px;
		height: 18px;
		border: 2px solid #777;
		border-right-color: #ddd;
		border-bottom-color: #ddd;
		background: #fff;
	}
	.check input:checked::after {
		content: '';
		display: block;
		width: 6px;
		height: 11px;
		margin: 0 auto;
		border: solid #000;
		border-width: 0 3px 3px 0;
		transform: rotate(40deg);
	}
	.patient input {
		width: 148px;
	}
	.patient {
		margin-right: 8px;
	}
	.person input {
		width: 160px;
	}

	/* Data grids */
	.pane {
		display: flex;
		border-top: 3px solid #14387c;
		border-left: 2px solid #14387c;
		background: #fff;
		font-family: var(--song);
		overflow: hidden;
	}
	.receipts {
		border-bottom: 3px solid #143c9c;
	}
	.pane-body {
		flex: 1;
		min-width: 0;
		overflow: hidden;
	}
	.receipt-grid {
		margin-bottom: 25px;
	}
	.grid {
		width: 1px;
		table-layout: fixed;
		border-collapse: separate;
		border-spacing: 0;
		font-size: 22px;
		line-height: 26px;
	}
	th,
	td {
		height: 31px;
		padding: 0 3px;
		text-align: left;
	}
	th div,
	td div {
		overflow-x: clip;
		overflow-y: visible;
		white-space: nowrap;
	}
	th {
		border-bottom: 2px solid #6e93cc;
		background: linear-gradient(#fff, #fff) right center / 2px 24px no-repeat, linear-gradient(#b4cff2, #a9c8ee 60%, #8fb4e6);
		font-size: 23px;
		font-weight: normal;
		text-align: center;
	}
	th.left {
		text-align: left;
	}
	td {
		border-right: 1px solid #999;
		border-bottom: 2px solid #a0a0a0;
	}
	td.right {
		text-align: right;
	}
	td.rownum {
		border-right-color: #7f9fd0;
		border-bottom-color: #8fa9cc;
		font-size: 22px;
		text-align: center;
	}
	.current td {
		background: #f0f0f0;
	}
	.striped td {
		background: #deedfb;
	}
	.printed td {
		background: #ffd9a0;
	}
	.receipts .current,
	.printed {
		font-size: 24px;
	}
	.current .pick {
		background: #ffd9a0;
	}
	.grid .rownum {
		background: #b0ccf0;
	}
	.pick {
		text-align: center;
		line-height: 0;
	}
	.pick input {
		appearance: none;
		width: 18px;
		height: 18px;
		border: 2px solid #111;
		background: #fff;
		vertical-align: middle;
	}
	.totals {
		border-top: 2px solid #7895cc;
		background: #a0bef5;
	}
	.totals td {
		height: 39px;
		padding: 0 4px;
		border: 0;
	}
	.totals .rownum {
		border-right: 1px solid #7f9fd0;
	}
	.total {
		height: 33px;
		padding: 0 4px;
		border: 2px solid #6f93cc;
		background: #b4d0f0;
		line-height: 31px;
		text-align: right;
	}
	.caption {
		text-align: left;
	}
	.details {
		flex: 1;
		flex-direction: column;
		border-top-width: 2px;
	}
	.detail-totals {
		margin-top: auto;
		border-bottom: 2px solid #6f93cc;
	}

	/* Scroll bars and splitter */
	.vscroll {
		display: flex;
		flex-direction: column;
		align-items: center;
		width: 24px;
		padding: 10px 0;
		background: #f0f0f0;
	}
	.arrow {
		border: 6px solid transparent;
	}
	.up {
		border-top: 0;
		border-bottom-color: #333;
	}
	.down {
		margin-top: auto;
		border-bottom: 0;
		border-top-color: #333;
	}
	.vscroll .thumb {
		flex: 0 0 178px;
		width: 22px;
		margin-top: 91px;
		border: 2px solid #8c8c8c;
		border-radius: 3px;
		background: repeating-linear-gradient(#555 0 2px, transparent 2px 5px) center / 10px 13px no-repeat, linear-gradient(90deg, #f6f6f6, #c4c4c8);
	}
	.hscroll {
		display: flex;
		align-items: center;
		height: 28px;
		padding: 0 9px 0 8px;
		background: #f0f0f0;
	}
	.prev {
		border-left: 0;
		border-right-color: #333;
	}
	.next {
		border-right: 0;
		border-left-color: #333;
	}
	.hscroll .thumb {
		flex: 1736 0 0;
		height: 24px;
		margin-left: 16px;
		border: 2px solid #949494;
		border-radius: 3px;
		background: repeating-linear-gradient(90deg, #555 0 2px, transparent 2px 5px) center / 13px 12px no-repeat, linear-gradient(#f4f4f4, #bfc2c4);
	}
	.hscroll .track {
		flex: 1317 0 0;
	}
	.splitter {
		display: flex;
		justify-content: center;
		height: 12px;
		border-left: 2px solid #777;
		background: #ffffe1;
	}
	.splitter-handle {
		display: flex;
		align-items: center;
		width: 30%;
		height: 12px;
		padding: 0 8px;
		border: 1px solid #999;
		background: #fff;
	}
	.splitter-handle svg {
		width: 12px;
		height: 8px;
	}
	.splitter-handle span {
		flex: 1;
		margin: 0 5px;
		border-top: 2px dotted #5c88c0;
	}

	/* Status bar */
	.status {
		display: flex;
		gap: 4px;
		height: 33px;
		padding: 2px 0;
		background: #a8c8f0;
		font-family: var(--song);
		font-size: 19px;
		line-height: 28px;
		white-space: nowrap;
	}
	.status div {
		padding-left: 3px;
		border: 1px solid #7f9fd0;
		background: linear-gradient(#d8e8fb, #c6dbf6 50%, #8db4ea);
	}
	.status .rest {
		flex: 1;
	}

	/* Message box */
	.dialog {
		position: absolute;
		top: 769px;
		left: calc(50% - 367px);
		display: flex;
		flex-direction: column;
		align-items: center;
		width: 731px;
		height: 211px;
		border: 2px solid #10283c;
		border-radius: 8px 8px 0 0;
		background: #f0f0f0;
		box-shadow: inset 0 0 0 3px #8fdcf0;
		overflow: hidden;
	}
	.dialog-title {
		display: flex;
		align-items: center;
		justify-content: space-between;
		align-self: stretch;
		height: 38px;
		padding: 0 6px 0 9px;
		background: linear-gradient(#c4d6e8, #98b3d2 25%, #b6cfe8);
	}
	.dialog p {
		align-self: flex-start;
		margin: 29px 0 32px 25px;
		line-height: 28px;
		white-space: nowrap;
	}
	.ok {
		width: 142px;
		height: 49px;
		padding: 5px;
		border: solid #666;
		border-width: 2px 4px 4px 2px;
		background: #f0f0f0;
	}
	.ok span {
		display: block;
		height: 36px;
		border: 2px dotted #222;
		line-height: 31px;
	}
	.side {
		position: absolute;
		top: 1254px;
		right: 2px;
		display: flex;
		align-items: center;
		justify-content: flex-end;
		width: 36px;
		height: 52px;
		padding-right: 8px;
		border-radius: 26px 0 0 26px;
		background: #4a90fc;
	}
	.side svg {
		width: 10px;
	}

	/* Task bar */
	.taskbar {
		display: flex;
		align-items: center;
		gap: 5px;
		height: 65px;
		padding-left: 15px;
		border-top: 1px solid #c8d4e2;
		border-radius: 0 0 10px 10px;
		background: #8394a8;
		color: #fff;
	}
	.start {
		width: 58px;
		margin-right: 19px;
	}
	.task {
		display: flex;
		align-items: center;
		gap: 7px;
		width: 258px;
		height: 63px;
		padding-left: 12px;
		border: 2px solid #4c5866;
		border-radius: 5px;
		background: linear-gradient(170deg, #c0c8d0 10%, #97a5b6 45%, #8a9aac);
		box-shadow: inset 0 0 0 1px #d4dce4;
		white-space: nowrap;
		text-shadow: 0 1px 2px #4c5866;
	}
	.task.active {
		border-color: #222;
		background: linear-gradient(170deg, #dcd4cc 10%, #dcbc98 45%, #f4d2a0);
	}
	.task.pinned {
		width: 95px;
		padding-left: 20px;
		border-color: transparent;
		background: none;
		box-shadow: none;
	}
	.task .icon {
		width: 52px;
		height: 52px;
	}
	.tray {
		display: flex;
		align-items: center;
		gap: 11px;
		margin-left: auto;
	}
	.tray svg {
		width: 26px;
	}
	.clock {
		display: flex;
		flex-direction: column;
		width: 112px;
		margin: 0 9px 0 20px;
		line-height: 29px;
		text-align: center;
	}
	.show-desktop {
		width: 24px;
		height: 63px;
		margin-right: 3px;
		border: 2px solid #4c5866;
		background: linear-gradient(#a8b4c0, #5c6a7a);
	}
</style>
